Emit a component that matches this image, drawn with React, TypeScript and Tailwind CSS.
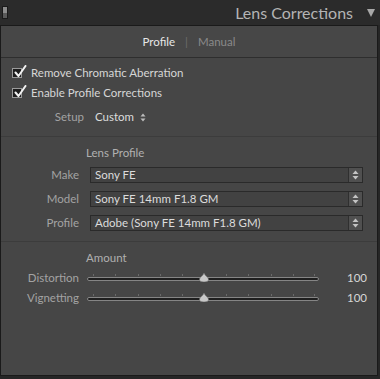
import React from "react";

const font = { fontFamily: "Lato, 'Open Sans', sans-serif" };

function Checkbox({ label }: { label: string }) {
  return (
    <div className="flex h-[20px] items-center">
      <div className="relative ml-[11px] h-[10px] w-[10px] border border-[#9a9a9a] bg-[#1e1e1e]">
        <svg className="absolute left-[1px] top-[-4px]" width="13" height="13" viewBox="0 0 13 13">
          <path d="M1.5 7.5 L4.5 11 L11.5 1" fill="none" stroke="#f2f2f2" strokeWidth="2" strokeLinecap="round" strokeLinejoin="round" />
        </svg>
      </div>
      <span className="ml-[9px] text-[11.5px] text-[#d6d6d6]">{label}</span>
    </div>
  );
}

function Stepper() {
  return (
    <svg width="7" height="10" viewBox="0 0 7 10">
      <path d="M3.5 0.5 L6.5 4 L0.5 4 Z" fill="#c4c4c4" />
      <path d="M3.5 9.5 L6.5 6 L0.5 6 Z" fill="#c4c4c4" />
    </svg>
  );
}

function SelectRow({ label, value }: { label: string; value: string }) {
  return (
    <div className="flex h-[16px] items-center">
      <span className="w-[78px] text-right text-[11.5px] text-[#a3a3a3]">{label}</span>
      <div className="ml-[11px] flex h-[16px] w-[273px] items-center border border-[#2a2a2a] bg-[#424242]">
        <span className="flex-1 pl-[4px] text-[11.5px] text-[#dcdcdc]">{value}</span>
        <div className="flex h-full w-[14px] items-center justify-center border-l border-[#2f2f2f] bg-[#505050]">
          <Stepper />
        </div>
      </div>
    </div>
  );
}

function SliderRow({ label, value }: { label: string; value: string }) {
  const ticks = [6, 28, 51, 73, 95, 117, 139, 161, 184, 206, 227];
  return (
    <div className="flex h-[20px] items-center">
      <span className="w-[78px] text-right text-[11.5px] text-[#a3a3a3]">{label}</span>
      <div className="relative ml-[8px] h-[20px] w-[232px]">
        {ticks.map((t) => (
          <div key={t} className="absolute top-[6px] h-[2px] w-px bg-[#6a6a6a]" style={{ left: t }} />
        ))}
        <div className="absolute left-0 right-0 top-[9px] h-[4px] rounded-full border border-[#858585] bg-[#1f1f1f]" />
        <svg className="absolute left-[112px] top-[5px]" width="10" height="9" viewBox="0 0 10 9">
          <path d="M5 0 C6 3 9.5 4 9.5 6.5 C9.5 8.2 8 9 5 9 C2 9 0.5 8.2 0.5 6.5 C0.5 4 4 3 5 0 Z" fill="#c8c8c8" stroke="#6e6e6e" strokeWidth="0.6" />
        </svg>
      </div>
      <span className="ml-[28px] w-[17px] text-right text-[11.5px] text-[#d6d6d6]">{value}</span>
    </div>
  );
}

export default function App() {
  return (
    <div className="h-[379px] w-[380px] overflow-hidden bg-[#262626]" style={font}>
      {/* header */}
      <div className="flex h-[25px] items-center bg-[#2b2b2b]">
        <div className="ml-[2px] flex h-[13px] w-[6px] flex-col border border-[#1a1a1a]">
          <div className="h-1/2 bg-[#8c8c8c]" />
          <div className="h-1/2 bg-[#5a5a5a]" />
        </div>
        <span className="ml-auto text-[16px] leading-none text-[#b4b4b4]">Lens Corrections</span>
        <svg className="ml-[14px] mr-[5px]" width="8" height="8" viewBox="0 0 8 8">
          <path d="M0 0 L8 0 L4 8 Z" fill="#a8a8a8" />
        </svg>
      </div>

      {/* panel */}
      <div className="h-[351px] w-[378px] border border-[#1a1a1a] bg-[#464646]">
        <div className="flex h-[32px] items-center justify-center border-b border-[#2e2e2e] bg-[#474747] text-[11.5px]">
          <span className="text-[#e6e6e6]">Profile</span>
          <span className="mx-[10px] text-[#6c6c6c]">|</span>
          <span className="text-[#8a8a8a]">Manual</span>
        </div>

        <div className="pt-[5px]">
          <Checkbox label="Remove Chromatic Aberration" />
          <Checkbox label="Enable Profile Corrections" />
          <div className="mt-[4px] flex h-[20px] items-center">
            <span className="w-[83px] text-right text-[11.5px] text-[#a3a3a3]">Setup</span>
            <span className="ml-[11px] text-[11.5px] text-[#dcdcdc]">Custom</span>
            <span className="ml-[6px] flex items-center">
              <svg width="6" height="9" viewBox="0 0 6 9">
                <path d="M3 0.5 L5.5 3.5 L0.5 3.5 Z" fill="#bcbcbc" />
                <path d="M3 8.5 L5.5 5.5 L0.5 5.5 Z" fill="#bcbcbc" />
              </svg>
            </span>
          </div>
        </div>

        <div className="mt-[9px] border-t border-[#3c3c3c]" />

        <div className="pt-[6px]">
          <div className="flex h-[20px] items-center pl-[85px] text-[11.5px] text-[#b0b0b0]">Lens Profile</div>
          <div className="mt-[4px] flex flex-col gap-[8px]">
            <SelectRow label="Make" value="Sony FE" />
            <SelectRow label="Model" value="Sony FE 14mm F1.8 GM" />
            <SelectRow label="Profile" value="Adobe (Sony FE 14mm F1.8 GM)" />
          </div>
        </div>

        <div className="mt-[10px] border-t border-[#3c3c3c]" />

        <div className="pt-[6px]">
          <div className="flex h-[20px] items-center pl-[85px] text-[11.5px] text-[#b0b0b0]">Amount</div>
          <SliderRow label="Distortion" value="100" />
          <SliderRow label="Vignetting" value="100" />
        </div>
      </div>
    </div>
  );
}
